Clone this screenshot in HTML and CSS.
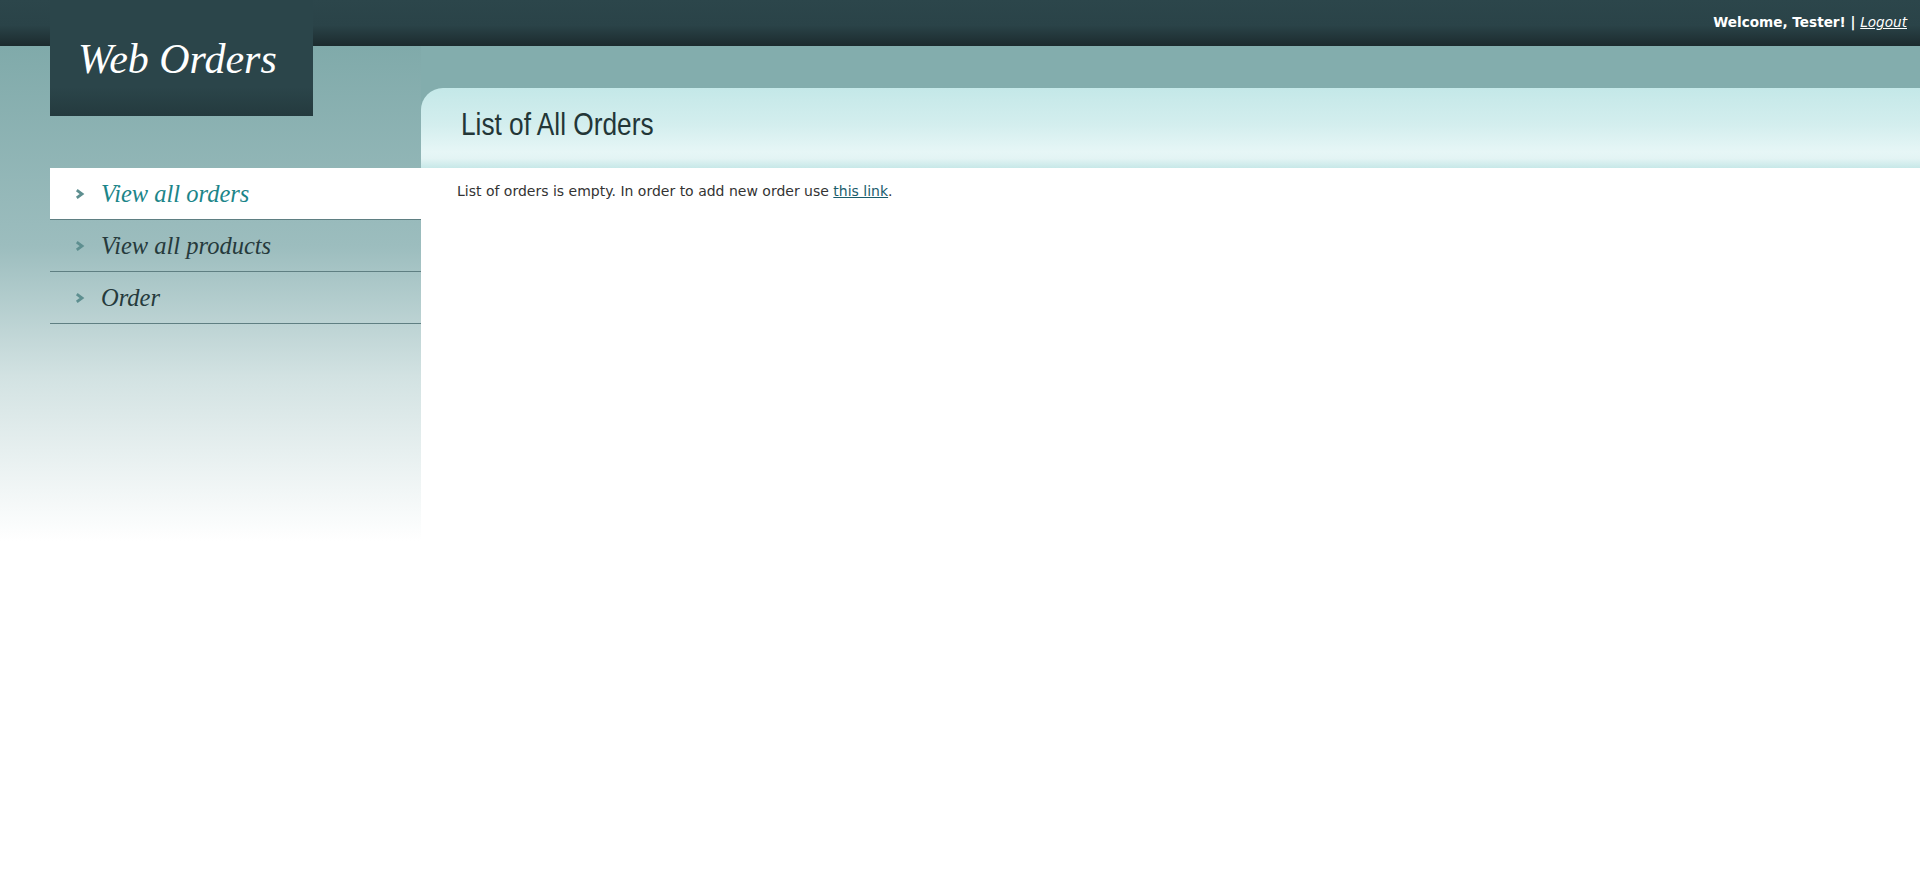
FILE: index.html
```html
<!DOCTYPE html>
<html lang="en">
<head>
<meta charset="utf-8">
<title>Web Orders</title>
<link rel="stylesheet" href="styles.css">
</head>
<body>
<div class="topbar">
  <div class="login-info">Welcome, Tester! | <a href="#" class="logout">Logout</a></div>
</div>
<div class="logo"><span class="logo-text">Web Orders</span></div>
<div class="layout">
  <aside class="sidebar">
    <ul class="menu">
      <li class="menu-item active"><svg class="chev" width="10" height="10" viewBox="0 0 10 10"><path d="M1.8 1.2 L7 5 L1.8 8.8" fill="none" stroke="currentColor" stroke-width="2.8"/></svg><a href="#">View all orders</a></li>
      <li class="menu-item"><svg class="chev" width="10" height="10" viewBox="0 0 10 10"><path d="M1.8 1.2 L7 5 L1.8 8.8" fill="none" stroke="currentColor" stroke-width="2.8"/></svg><a href="#">View all products</a></li>
      <li class="menu-item"><svg class="chev" width="10" height="10" viewBox="0 0 10 10"><path d="M1.8 1.2 L7 5 L1.8 8.8" fill="none" stroke="currentColor" stroke-width="2.8"/></svg><a href="#">Order</a></li>
    </ul>
  </aside>
  <main class="content">
    <div class="content-head"><h1 class="title">List of All Orders</h1></div>
    <p class="message">List of orders is empty. In order to add new order use <a href="#" class="msg-link">this link</a>.</p>
  </main>
</div>
</body>
</html>
```
FILE: styles.css
```css
html, body {
  margin: 0;
  padding: 0;
  background: #ffffff;
}
body {
  font-family: "DejaVu Sans", Verdana, sans-serif;
  font-size: 14px;
  color: #333333;
}
.topbar {
  height: 46px;
  background: linear-gradient(#2c464b 0%, #2a4348 55%, #1c2b2e 100%);
  display: flex;
  justify-content: flex-end;
  align-items: flex-start;
  padding-right: 13px;
}
.login-info {
  margin-top: 14px;
  color: #ffffff;
  font-weight: bold;
  font-size: 13.6px;
}
.logout {
  color: #ffffff;
  font-weight: normal;
  font-style: italic;
}
.logo {
  position: absolute;
  left: 50px;
  top: 0;
  width: 263px;
  height: 116px;
  background: linear-gradient(#2b454a 0%, #2b454a 75%, #243a3e 100%);
  box-sizing: border-box;
  padding: 38px 0 0 28px;
}
.logo-text {
  font-family: "Liberation Serif", Georgia, serif;
  font-style: italic;
  font-size: 42px;
  line-height: 1;
  color: #ffffff;
  display: block;
}
.layout {
  display: grid;
  grid-template-columns: 421px 1fr;
}
.sidebar {
  height: 500px;
  background: linear-gradient(#80aaaa 0px, #9cbdbe 200px, #d2e2e2 330px, #ffffff 495px);
  padding-top: 122px;
  box-sizing: border-box;
}
.menu {
  list-style: none;
  margin: 0 0 0 50px;
  padding: 0;
}
.menu-item {
  height: 51px;
  border-bottom: 1px solid #5f7f82;
  display: flex;
  align-items: center;
  padding-left: 25px;
}
.menu-item.active {
  background: #ffffff;
}
.chev {
  color: #5e8f90;
  margin-right: 16px;
  flex: none;
}
.menu-item a {
  font-family: "Liberation Serif", Georgia, serif;
  font-style: italic;
  font-size: 24.5px;
  color: #263a3c;
  text-decoration: none;
}
.menu-item.active a {
  color: #1c8589;
}
.content {
  background: linear-gradient(#83adad 0px, #83adad 122px, #ffffff 122px);
  padding-top: 42px;
}
.content-head {
  height: 80px;
  border-top-left-radius: 22px;
  background: linear-gradient(#c4e8e8 0%, #d3eeee 45%, #e6f6f6 80%, #e3f4f4 88%, #c7e8e8 100%);
  padding-left: 36px;
  box-sizing: border-box;
}
.title {
  display: inline-block;
  margin: 0 0 0 4px;
  padding-top: 17px;
  font-family: "Liberation Sans", Arial, sans-serif;
  font-weight: normal;
  font-size: 32px;
  line-height: 1.2;
  color: #233637;
  transform: scaleX(0.82);
  transform-origin: left center;
}
.message {
  margin: 15px 0 0 36px;
  color: #333333;
}
.msg-link {
  color: #1b5d6c;
}
```
